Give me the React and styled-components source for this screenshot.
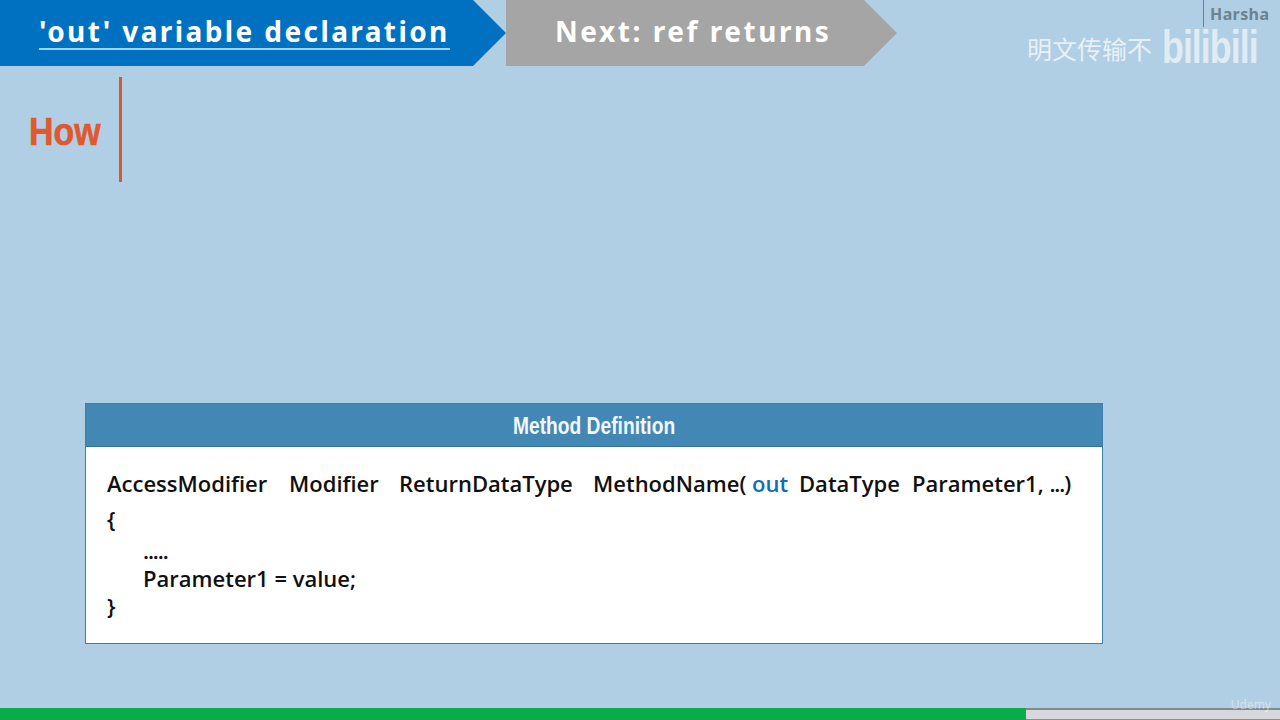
import React from "react";
import styled, { createGlobalStyle } from "styled-components";

const GlobalStyle = createGlobalStyle`
  html, body {
    margin: 0;
    padding: 0;
    background: #b0cfe4;
  }
`;

const App = () => {
  return (
    <>
      <GlobalStyle />
      <Slide>
        <TopBar>
          <CurrentTab>
            <CurrentTitle>'out' variable declaration</CurrentTitle>
          </CurrentTab>
          <NextTab>
            <NextTitle>Next: ref returns</NextTitle>
          </NextTab>
        </TopBar>

        <HowSection>
          <HowLabel>How</HowLabel>
          <HowRule />
        </HowSection>

        <DefinitionCard>
          <CardHeader>
            <CardTitle>Method Definition</CardTitle>
          </CardHeader>
          <CardBody>
            <SignatureLine>
              <Word $width={182}>AccessModifier</Word>
              <Word $width={110}>Modifier</Word>
              <Word $width={194}>ReturnDataType</Word>
              <Word $width={159}>MethodName(</Word>
              <OutWord $width={47}>out</OutWord>
              <Word $width={113}>DataType</Word>
              <Word>
                Parameter1, <Dots>...</Dots>)
              </Word>
            </SignatureLine>
            <CodeLine $height={36}>{"{"}</CodeLine>
            <CodeLine $height={27} $indent>
              <Dots>.....</Dots>
            </CodeLine>
            <CodeLine $height={28} $indent>Parameter1 = value;</CodeLine>
            <CodeLine $height={28}>{"}"}</CodeLine>
          </CardBody>
        </DefinitionCard>

        <ProgressTrack>
          <ProgressFill $percent={80.15} />
          <ProgressRest />
        </ProgressTrack>

        <AuthorMark>Harsha</AuthorMark>
        <BiliMark>
          <BiliCaption>明文传输不</BiliCaption>
          <BiliLogo>bilibili</BiliLogo>
        </BiliMark>
        <UdemyMark>Udemy</UdemyMark>
      </Slide>
    </>
  );
};

export default App;

const Slide = styled.div`
  position: relative;
  width: 1280px;
  height: 720px;
  overflow: hidden;
  display: flex;
  flex-direction: column;
  background: #b0cfe4;
  font-family: "Open Sans", "Noto Sans", Arial, sans-serif;
`;

const TopBar = styled.header`
  display: flex;
  height: 66px;
`;

const CurrentTab = styled.div`
  width: 506px;
  display: flex;
  align-items: center;
  padding: 0 0 2px 39px;
  box-sizing: border-box;
  background: #0070c0;
  clip-path: polygon(0 0, 473px 0, 506px 33px, 473px 66px, 0 66px);
`;

const CurrentTitle = styled.h1`
  margin: 0;
  font-family: "Noto Sans", sans-serif;
  font-size: 28px;
  font-weight: 700;
  line-height: 33px;
  letter-spacing: 2.4px;
  color: #ffffff;
  border-bottom: 2px solid #9ed4f7;
  white-space: nowrap;
`;

const NextTab = styled.div`
  width: 391px;
  display: flex;
  align-items: center;
  padding: 0 0 4px 49px;
  box-sizing: border-box;
  background: #a5a5a5;
  clip-path: polygon(0 0, 358px 0, 391px 33px, 358px 66px, 0 66px);
`;

const NextTitle = styled.h2`
  margin: 0;
  font-family: "Noto Sans", sans-serif;
  font-size: 28px;
  font-weight: 700;
  line-height: 34px;
  letter-spacing: 2.55px;
  color: #ffffff;
  white-space: nowrap;
`;

const HowSection = styled.section`
  display: flex;
  align-items: center;
  height: 105px;
  margin-top: 11px;
  padding-left: 29px;
`;

const HowLabel = styled.div`
  width: 90px;
  padding-top: 5px;
  font-family: "Liberation Sans", sans-serif;
  font-size: 39px;
  font-weight: 700;
  color: #e0582d;
  -webkit-text-stroke: 0.6px #e0582d;
  transform: scaleX(0.87);
  transform-origin: left center;
`;

const HowRule = styled.div`
  width: 3px;
  height: 105px;
  background: #d9592f;
`;

const DefinitionCard = styled.section`
  width: 1018px;
  height: 241px;
  box-sizing: border-box;
  margin: 221px 0 0 85px;
  border: 1px solid #3f7ea8;
  background: #ffffff;
`;

const CardHeader = styled.div`
  height: 42px;
  display: flex;
  align-items: center;
  justify-content: center;
  background: #4388b5;
  border-bottom: 1px solid #34729b;
`;

const CardTitle = styled.h3`
  margin: 0;
  padding-top: 2px;
  font-family: "Liberation Sans", sans-serif;
  font-size: 23px;
  font-weight: 700;
  color: #f2f8fc;
  transform: scaleX(0.835);
`;

const CardBody = styled.div`
  padding: 18px 0 0 21px;
  font-size: 22px;
  font-weight: 600;
  color: #101010;
`;

const SignatureLine = styled.div`
  display: flex;
  height: 36px;
  line-height: 37px;
  white-space: pre;
`;

const Word = styled.span`
  flex: none;
  width: ${(props) => (props.$width ? `${props.$width}px` : "auto")};
`;

const OutWord = styled(Word)`
  color: #0f6fb5;
`;

const Dots = styled.span`
  letter-spacing: -1.1px;
`;

const CodeLine = styled.div`
  height: ${(props) => props.$height}px;
  line-height: ${(props) => props.$height}px;
  padding-left: ${(props) => (props.$indent ? "36px" : "0")};
`;

const ProgressTrack = styled.div`
  position: absolute;
  left: 0;
  right: 0;
  bottom: 0;
  height: 12px;
  display: flex;
`;

const ProgressFill = styled.div`
  width: ${(props) => props.$percent}%;
  background: #0bab4b;
`;

const ProgressRest = styled.div`
  flex: 1;
  box-sizing: border-box;
  background: #d8d8dc;
  border-top: 2px solid #7f8a8c;
  border-bottom: 1px solid #8c8c8c;
`;

const AuthorMark = styled.div`
  position: absolute;
  top: 0;
  left: 1203px;
  height: 27px;
  padding-left: 6px;
  border-left: 1px solid #6d8191;
  font-family: "Noto Sans", sans-serif;
  font-size: 16px;
  font-weight: 700;
  line-height: 29px;
  letter-spacing: 0.4px;
  color: #6d8191;
`;

const BiliMark = styled.div`
  position: absolute;
  top: 23px;
  left: 1027px;
  display: flex;
  align-items: center;
  gap: 10px;
  color: rgba(255, 255, 255, 0.72);
`;

const BiliCaption = styled.span`
  font-family: "Noto Sans CJK SC", sans-serif;
  font-size: 25px;
  line-height: 50px;
`;

const BiliLogo = styled.span`
  font-family: "Liberation Sans", sans-serif;
  font-size: 38px;
  font-weight: 700;
  letter-spacing: -1px;
  line-height: 46px;
  color: rgba(240, 245, 248, 0.75);
  transform: scaleX(0.94) scaleY(1.22);
  transform-origin: left 60%;
`;

const UdemyMark = styled.div`
  position: absolute;
  right: 9px;
  bottom: 7px;
  font-family: "Noto Sans", sans-serif;
  font-size: 12px;
  color: rgba(255, 255, 255, 0.45);
`;
